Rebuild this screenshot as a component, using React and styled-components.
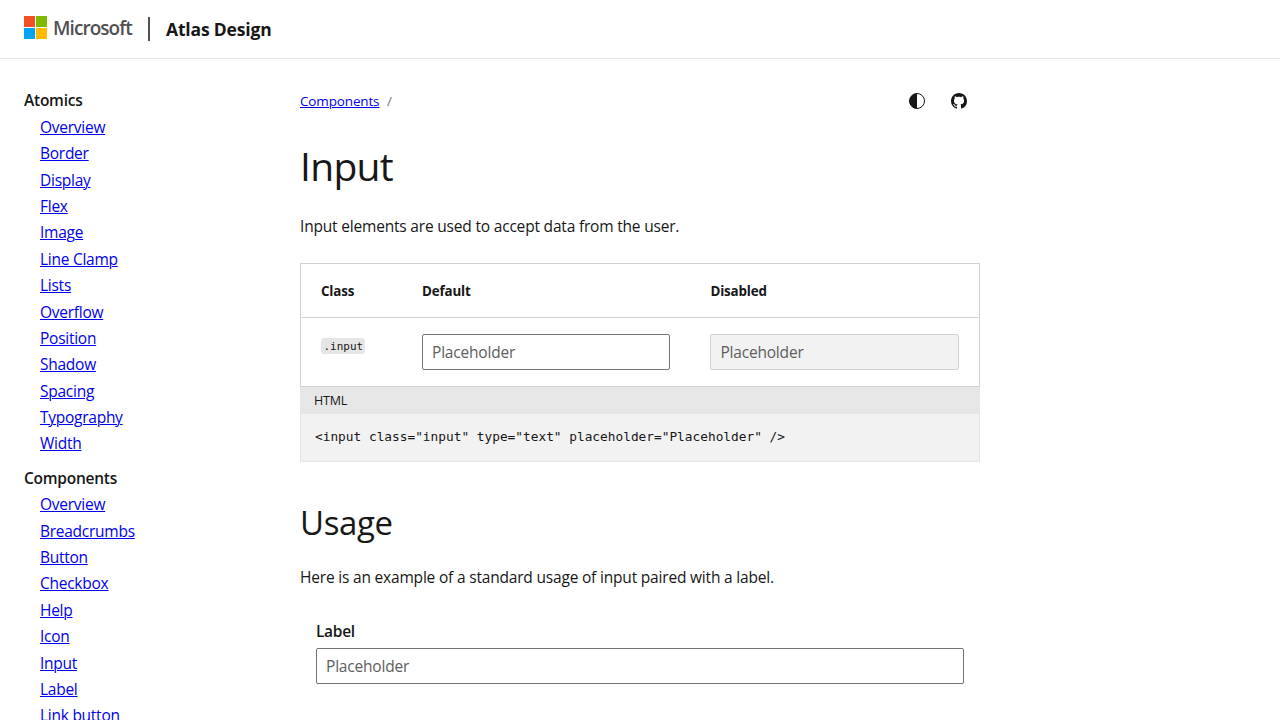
import React from "react";
import styled, { createGlobalStyle } from "styled-components";

const GlobalStyle = createGlobalStyle`
  *, *::before, *::after { box-sizing: border-box; }
  body {
    margin: 0;
    height: 720px;
    overflow: hidden;
    background: #fff;
    color: #171717;
    font-family: "Segoe UI", "Open Sans", "Noto Sans", sans-serif;
    font-size: 15.5px;
    font-weight: 400;
    line-height: 24px;
    letter-spacing: -0.19px;
  }
`;

const Header = styled.header`
  display: flex;
  align-items: center;
  height: 59px;
  padding: 0 24px;
  border-bottom: 1px solid #e6e6e6;
`;

const Logo = styled.a`
  display: flex;
  align-items: center;
  gap: 6px;
  height: 24px;
  margin-top: -4px;
`;

const LogoText = styled.span`
  width: 79px;
  padding-top: 1px;
  color: #505050;
  font-size: 19px;
  font-weight: 600;
  letter-spacing: -0.95px;
`;

const Divider = styled.span`
  width: 2px;
  height: 24px;
  margin: 0 16px;
  background: #505050;
`;

const Brand = styled.span`
  font-size: 17.5px;
  font-weight: 700;
  letter-spacing: -0.17px;
`;

const Layout = styled.div`
  display: flex;
  height: 661px;
  overflow: hidden;
`;

const Sidebar = styled.nav`
  width: 300px;
  padding: 29.4px 0 0 24px;
`;

const NavTitle = styled.p`
  margin: 0;
  font-weight: 600;
  letter-spacing: -0.25px;
`;

const NavList = styled.ul`
  margin: 0 0 8.1px;
  padding: 2.6px 0 0 16px;
  list-style: none;
  letter-spacing: -0.26px;
`;

const NavItem = styled.li`
  height: 26.37px;
`;

const Link = styled.a`
  color: #0000ee;
  text-decoration: underline;
  text-decoration-thickness: 1px;
  text-underline-offset: 1px;
`;

const Main = styled.main`
  width: 680px;
  padding-top: 24px;
`;

const Toolbar = styled.div`
  display: flex;
  align-items: center;
  justify-content: space-between;
  height: 36px;
`;

const Crumbs = styled.div`
  display: flex;
  gap: 7.5px;
  font-size: 13.5px;
  letter-spacing: -0.15px;
`;

const Slash = styled.span`
  color: #757575;
`;

const Actions = styled.div`
  display: flex;
  gap: 26px;
  padding-right: 13px;

  svg { display: block; width: 16px; height: 16px; }
`;

const Title = styled.h1`
  margin: 21px 0 0;
  font-size: 39px;
  font-weight: 400;
  line-height: 52px;
  letter-spacing: -0.7px;
`;

const Heading = styled.h2`
  margin: 37px 0 0;
  font-size: 33px;
  font-weight: 400;
  line-height: 48px;
  letter-spacing: -0.4px;
`;

const Paragraph = styled.p`
  margin: ${(p) => p.$top}px 0 0;
`;

const Table = styled.div`
  margin-top: ${(p) => p.$top}px;
  border: 1px solid #d2d2d2;
`;

const Row = styled.div`
  display: grid;
  grid-template-columns: 101px 288.4px 1fr;
  height: ${(p) => (p.$head ? "54px" : "68px")};
  padding-top: ${(p) => (p.$head ? "15px" : "16px")};
  border-bottom: ${(p) => (p.$head ? "1px solid #d2d2d2" : "none")};
  font-size: ${(p) => (p.$head ? "13.4px" : "inherit")};
  font-weight: ${(p) => (p.$head ? 700 : "inherit")};
  letter-spacing: ${(p) => (p.$head ? "-0.16px" : "inherit")};
`;

const Cell = styled.div`
  padding: 0 20px;
`;

const Code = styled.code`
  display: block;
  width: 44px;
  height: 16px;
  margin-top: 4px;
  padding-left: 2.5px;
  border-radius: 3px;
  background: #e6e6e6;
  font: 11px/17px Consolas, "DejaVu Sans Mono", monospace;
  letter-spacing: 0;
`;

const Input = styled.input`
  display: block;
  width: 100%;
  height: 36px;
  padding: 0 9px;
  border: 1px solid ${(p) => (p.disabled ? "#d2d2d2" : "#757575")};
  border-radius: 2px;
  background: ${(p) => (p.disabled ? "#f2f2f2" : "#fff")};
  font: inherit;
  letter-spacing: inherit;

  &::placeholder { color: #5e5e5e; opacity: 1; }
`;

const CodeHeader = styled.div`
  height: 27px;
  padding-left: 14px;
  background: #e6e6e6;
  font-size: 12.5px;
  line-height: 27px;
`;

const Pre = styled.pre`
  height: 48px;
  margin: 0;
  padding: 11px 14px;
  border: 1px solid #e6e6e6;
  border-top: 0;
  background: #f2f2f2;
  font: 12.8px/24px Consolas, "DejaVu Sans Mono", monospace;
  letter-spacing: 0;
`;

const Field = styled.div`
  padding: 30px 16px 0;
`;

const Label = styled.label`
  display: block;
  margin-bottom: 5px;
  font-weight: 600;
  letter-spacing: -0.3px;
`;

const sections = [
  {
    title: "Atomics",
    items: ["Overview", "Border", "Display", "Flex", "Image", "Line Clamp", "Lists", "Overflow", "Position", "Shadow", "Spacing", "Typography", "Width"],
  },
  {
    title: "Components",
    items: ["Overview", "Breadcrumbs", "Button", "Checkbox", "Help", "Icon", "Input", "Label", "Link button"],
  },
];

function MicrosoftMark() {
  return (
    <svg width="23" height="23" viewBox="0 0 23 23">
      <path fill="#f25022" d="M0 0h11v11H0z" />
      <path fill="#7fba00" d="M12 0h11v11H12z" />
      <path fill="#00a4ef" d="M0 12h11v11H0z" />
      <path fill="#ffb900" d="M12 12h11v11H12z" />
    </svg>
  );
}

function ContrastIcon() {
  return (
    <svg viewBox="0 0 16 16">
      <circle cx="8" cy="8" r="7.5" fill="none" stroke="#171717" strokeWidth="1" />
      <path d="M8 0.5a7.5 7.5 0 0 0 0 15z" fill="#171717" />
    </svg>
  );
}

function GithubIcon() {
  return (
    <svg viewBox="0 0 16 16" fill="#171717">
      <path d="M8 0C3.58 0 0 3.58 0 8c0 3.54 2.29 6.53 5.47 7.59.4.07.55-.17.55-.38 0-.19-.01-.82-.01-1.49-2.01.37-2.53-.49-2.69-.94-.09-.23-.48-.94-.82-1.13-.28-.15-.68-.52-.01-.53.63-.01 1.08.58 1.23.82.72 1.21 1.87.87 2.33.66.07-.52.28-.87.51-1.07-1.78-.2-3.64-.89-3.64-3.95 0-.87.31-1.59.82-2.15-.08-.2-.36-1.02.08-2.12 0 0 .67-.21 2.2.82.64-.18 1.32-.27 2-.27.68 0 1.36.09 2 .27 1.53-1.04 2.2-.82 2.2-.82.44 1.1.16 1.92.08 2.12.51.56.82 1.27.82 2.15 0 3.07-1.87 3.75-3.65 3.95.29.25.54.73.54 1.48 0 1.07-.01 1.93-.01 2.2 0 .21.15.46.55.38A8.013 8.013 0 0 0 16 8c0-4.42-3.58-8-8-8z" />
    </svg>
  );
}

export default function App() {
  return (
    <>
      <GlobalStyle />
      <Header>
        <Logo>
          <MicrosoftMark />
          <LogoText>Microsoft</LogoText>
        </Logo>
        <Divider />
        <Brand>Atlas Design</Brand>
      </Header>
      <Layout>
        <Sidebar>
          {sections.map((section) => (
            <React.Fragment key={section.title}>
              <NavTitle>{section.title}</NavTitle>
              <NavList>
                {section.items.map((item) => (
                  <NavItem key={item}><Link href="#">{item}</Link></NavItem>
                ))}
              </NavList>
            </React.Fragment>
          ))}
        </Sidebar>
        <Main>
          <Toolbar>
            <Crumbs>
              <Link href="#">Components</Link>
              <Slash>/</Slash>
            </Crumbs>
            <Actions>
              <ContrastIcon />
              <GithubIcon />
            </Actions>
          </Toolbar>
          <Title>Input</Title>
          <Paragraph $top={22}>Input elements are used to accept data from the user.</Paragraph>
          <Table $top={25}>
            <Row $head>
              <Cell>Class</Cell>
              <Cell>Default</Cell>
              <Cell>Disabled</Cell>
            </Row>
            <Row>
              <Cell><Code>.input</Code></Cell>
              <Cell><Input placeholder="Placeholder" /></Cell>
              <Cell><Input placeholder="Placeholder" disabled /></Cell>
            </Row>
          </Table>
          <CodeHeader>HTML</CodeHeader>
          <Pre>{'<input class="input" type="text" placeholder="Placeholder" />'}</Pre>
          <Heading>Usage</Heading>
          <Paragraph $top={18}>Here is an example of a standard usage of input paired with a label.</Paragraph>
          <Field>
            <Label htmlFor="usage-input">Label</Label>
            <Input id="usage-input" placeholder="Placeholder" />
          </Field>
        </Main>
      </Layout>
    </>
  );
}
